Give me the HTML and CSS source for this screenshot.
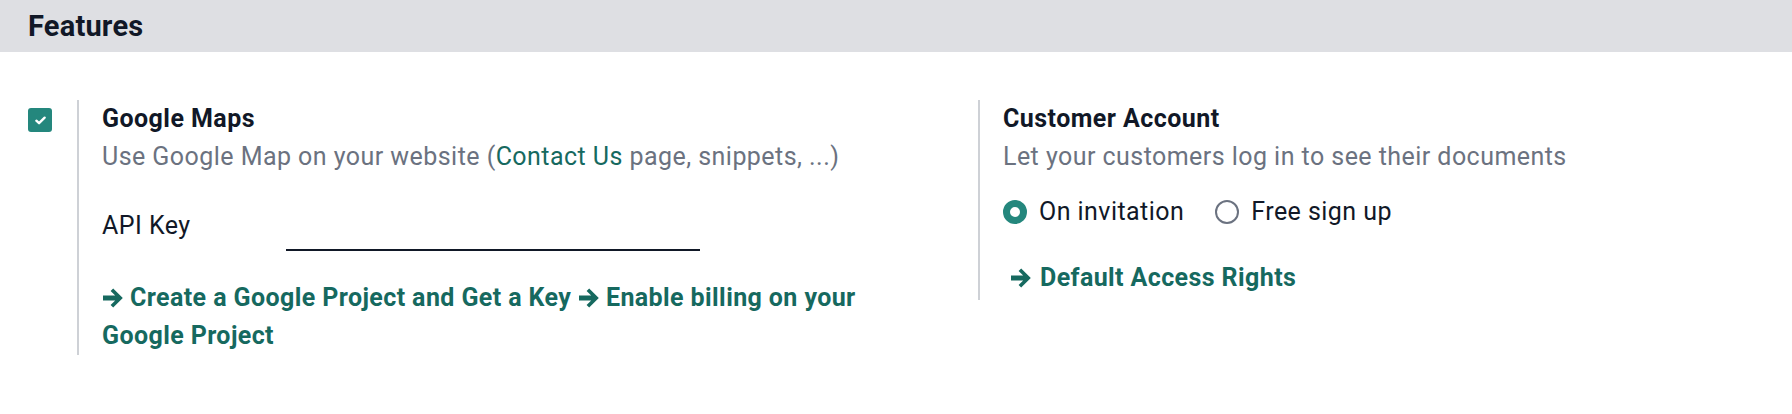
FILE: index.html
```html
<!DOCTYPE html>
<html lang="en">
<head>
<meta charset="utf-8">
<title>Features</title>
<link rel="stylesheet" href="styles.css">
</head>
<body>
<h2 class="section-title">Features</h2>
<div class="settings">
  <div class="setting">
    <div class="left-pane">
      <span class="checkbox checked">
        <svg viewBox="0 0 12 10" width="11" height="9"><path d="M1.4 5.2 4.4 8 10.6 1.8" fill="none" stroke="#fff" stroke-width="2.6" stroke-linecap="round" stroke-linejoin="round"/></svg>
      </span>
    </div>
    <div class="right-pane">
      <div class="setting-title">Google Maps</div>
      <div class="setting-desc">Use Google Map on your website (<a class="link" href="#">Contact Us</a> page, snippets, ...)</div>
      <div class="field-row">
        <label class="field-label">API Key</label>
        <span class="field-input"></span>
      </div>
      <div class="links">
        <a class="action-link" href="#"><svg class="arrow" viewBox="0 0 22 20" width="22" height="20"><path d="M1 7.6h12.2L8.6 3l2.6-2.6L20.8 10l-9.6 9.6L8.6 17l4.6-4.6H1z" fill="currentColor"/></svg>Create a Google Project and Get a Key</a>
        <a class="action-link" href="#"><svg class="arrow" viewBox="0 0 22 20" width="22" height="20"><path d="M1 7.6h12.2L8.6 3l2.6-2.6L20.8 10l-9.6 9.6L8.6 17l4.6-4.6H1z" fill="currentColor"/></svg>Enable billing on your Google Project</a>
      </div>
    </div>
  </div>
  <div class="setting">
    <div class="left-pane"></div>
    <div class="right-pane right-pane-short">
      <div class="setting-title">Customer Account</div>
      <div class="setting-desc">Let your customers log in to see their documents</div>
      <div class="radio-row">
        <label class="radio-option"><span class="radio checked"></span>On invitation</label>
        <label class="radio-option"><span class="radio"></span>Free sign up</label>
      </div>
      <a class="action-link btn-link" href="#"><svg class="arrow" viewBox="0 0 22 20" width="22" height="20"><path d="M1 7.6h12.2L8.6 3l2.6-2.6L20.8 10l-9.6 9.6L8.6 17l4.6-4.6H1z" fill="currentColor"/></svg>Default Access Rights</a>
    </div>
  </div>
</div>
</body>
</html>
```
FILE: styles.css
```css
html, body {
  margin: 0;
  padding: 0;
  background: #ffffff;
}
body {
  font-family: Roboto, "Liberation Sans", sans-serif;
  font-size: 25px;
  letter-spacing: 0.45px;
  line-height: 36px;
  color: #111827;
}
.section-title {
  margin: 0;
  height: 52px;
  box-sizing: border-box;
  padding: 6px 0 0 28px;
  background: #dedfe3;
  font-size: 29px;
  font-weight: 700;
  letter-spacing: 0.2px;
  line-height: 40px;
  color: #111827;
}
.settings {
  display: grid;
  grid-template-columns: 901px 1fr;
  padding: 48px 0 0 28px;
}
.setting {
  display: flex;
  align-items: flex-start;
}
.left-pane {
  width: 49px;
  flex: none;
  padding-top: 8px;
}
.checkbox {
  display: flex;
  align-items: center;
  justify-content: center;
  width: 24px;
  height: 24px;
  border-radius: 3px;
  box-sizing: border-box;
}
.checkbox.checked {
  background: #24877d;
}
.right-pane {
  flex: 1;
  border-left: 2px solid #ced1d6;
  padding: 1px 0 0 23px;
  min-height: 251px;
}
.right-pane-short {
  min-height: 199px;
}
.setting-title {
  font-weight: 700;
  color: #111827;
}
.setting-desc {
  margin-top: 2px;
  color: #6b7280;
}
.link {
  color: #16695f;
  text-decoration: none;
}
.field-row {
  display: flex;
  align-items: flex-start;
  margin-top: 33px;
}
.field-label {
  width: 184px;
  flex: none;
  color: #111827;
}
.field-input {
  display: block;
  width: 414px;
  height: 43px;
  box-sizing: border-box;
  border-bottom: 2px solid #111827;
}
.links {
  margin-top: 28px;
  line-height: 38px;
}
.action-link {
  color: #16695f;
  font-weight: 700;
  letter-spacing: 0.4px;
  text-decoration: none;
}
.arrow {
  display: inline-block;
  vertical-align: -2px;
  margin-right: 6px;
}
.radio-row {
  display: flex;
  align-items: center;
  margin-top: 19px;
  gap: 31px;
}
.radio-option {
  display: flex;
  align-items: center;
  gap: 12px;
  color: #111827;
}
.radio {
  width: 24px;
  height: 24px;
  border-radius: 50%;
  box-sizing: border-box;
  border: 2px solid #6b7280;
  background: #fff;
}
.radio.checked {
  border: 7px solid #24877d;
  background: #fff;
}
.btn-link {
  display: inline-block;
  margin-top: 30px;
  padding-left: 7px;
}
.btn-link .arrow {
  margin-right: 8px;
}
```
